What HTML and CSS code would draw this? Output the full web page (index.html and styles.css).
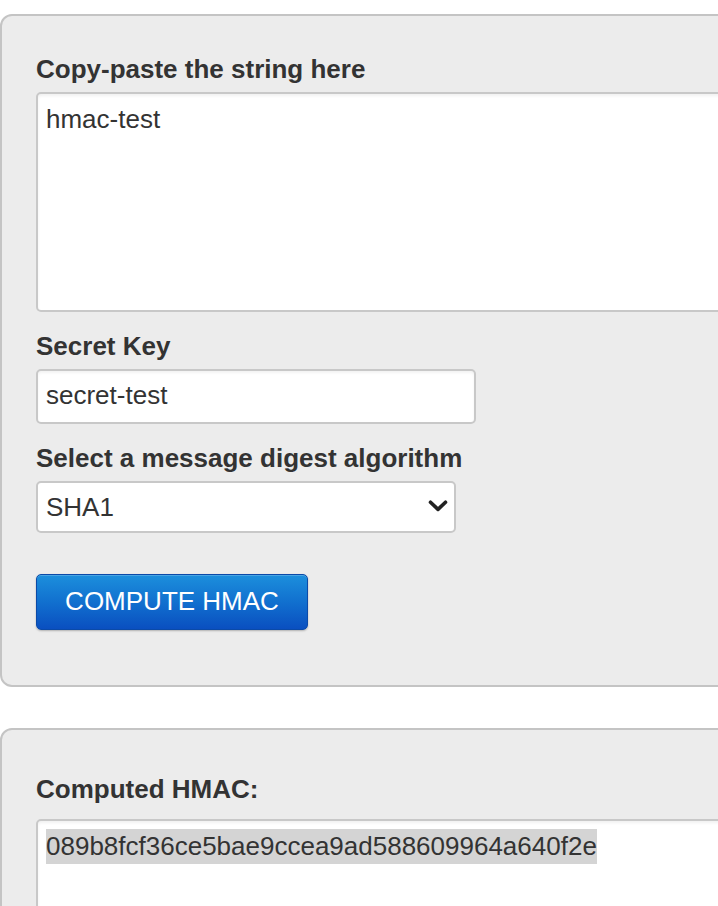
FILE: index.html
```html
<!DOCTYPE html>
<html>
<head>
<meta charset="utf-8">
<link rel="stylesheet" href="styles.css">
</head>
<body>
<div class="page">
  <form class="panel panel-input">
    <label class="label label-first" for="msg">Copy-paste the string here</label>
    <textarea id="msg" class="field area">hmac-test</textarea>
    <label class="label" for="key">Secret Key</label>
    <input id="key" class="field input" type="text" value="secret-test">
    <label class="label" for="alg">Select a message digest algorithm</label>
    <div class="select-wrap">
      <select id="alg" class="field select">
        <option>SHA1</option>
        <option>SHA256</option>
        <option>MD5</option>
      </select>
      <svg class="chevron" width="20" height="12" viewBox="0 0 20 12"><path d="M2.5 2.2 L10 9.4 L17.5 2.2" fill="none" stroke="#222" stroke-width="3.6" stroke-linecap="round" stroke-linejoin="round"/></svg>
    </div>
    <button type="button" class="btn">COMPUTE HMAC</button>
  </form>
  <div class="panel panel-output">
    <div class="label label-out">Computed HMAC:</div>
    <div class="field output"><span class="sel">089b8fcf36ce5bae9ccea9ad588609964a640f2e</span></div>
  </div>
</div>
</body>
</html>
```
FILE: styles.css
```css
html, body {
  margin: 0;
  padding: 0;
  background: #ffffff;
  overflow: hidden;
}
body {
  width: 718px;
  height: 906px;
  font-family: "Liberation Sans", Arial, Helvetica, sans-serif;
  color: #333333;
}
.page {
  padding-top: 14px;
  width: 860px;
}
.panel {
  background: #ececec;
  border: 2px solid #c4c4c4;
  border-radius: 12px;
  padding-left: 34px;
  display: flex;
  flex-direction: column;
  align-items: flex-start;
  box-sizing: border-box;
  width: 860px;
}
.panel-input {
  padding-top: 38px;
  padding-bottom: 55px;
  margin: 0;
}
.panel-output {
  margin-top: 41px;
  padding-top: 44px;
  height: 300px;
}
.label {
  display: block;
  font-size: 26px;
  line-height: 30px;
  font-weight: bold;
  color: #333333;
  margin-top: 19px;
  margin-bottom: 8px;
}
.label-first {
  margin-top: 0;
}
.label-out {
  margin-top: 0;
  margin-bottom: 15px;
}
.field {
  font-family: "Liberation Sans", Arial, Helvetica, sans-serif;
  font-size: 26px;
  color: #333333;
  background: #ffffff;
  border: 2px solid #c8c8c8;
  border-radius: 5px;
  box-sizing: border-box;
  margin: 0;
  outline: none;
}
.area {
  display: block;
  width: 760px;
  height: 220px;
  padding: 10px 8px 8px 8px;
  line-height: 30px;
  resize: none;
  box-shadow: inset 0 2px 3px rgba(0, 0, 0, 0.06);
}
.input {
  display: block;
  width: 440px;
  height: 55px;
  padding: 0 8px 2px 8px;
  line-height: 30px;
  box-shadow: inset 0 2px 3px rgba(0, 0, 0, 0.05);
}
.select-wrap {
  position: relative;
  width: 420px;
  height: 52px;
}
.select {
  -webkit-appearance: none;
  appearance: none;
  display: block;
  width: 420px;
  height: 52px;
  padding: 0 8px;
  line-height: 30px;
}
.chevron {
  position: absolute;
  right: 8px;
  top: 19px;
  pointer-events: none;
}
.btn {
  margin-top: 41px;
  width: 272px;
  height: 56px;
  padding: 0 0 2px 0;
  font-family: "Liberation Sans", Arial, Helvetica, sans-serif;
  font-size: 26px;
  color: #ffffff;
  background: linear-gradient(to bottom, #1c8fdc 0%, #1170cf 50%, #0a4fc0 100%);
  border: 1px solid #0b4aa8;
  border-radius: 5px;
  box-shadow: 0 1px 2px rgba(0, 0, 0, 0.25), inset 0 1px 0 rgba(255, 255, 255, 0.2);
  cursor: pointer;
}
.output {
  width: 760px;
  height: 200px;
  padding: 8px 8px;
  line-height: 35px;
  box-shadow: inset 0 2px 3px rgba(0, 0, 0, 0.06);
}
.sel {
  background: #d4d4d4;
  display: inline-block;
  line-height: 35px;
}
```
